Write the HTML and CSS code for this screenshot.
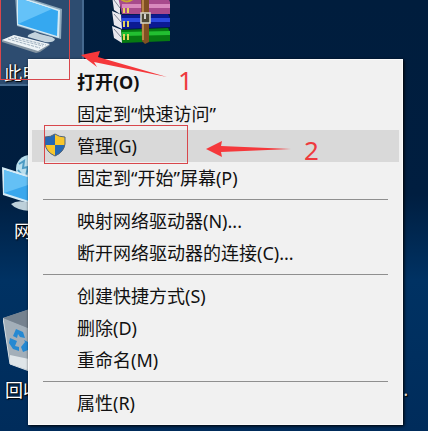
FILE: index.html
```html
<!DOCTYPE html>
<html lang="zh-CN">

<head>
	<title>桌面</title>
	<meta charset="UTF-8">
	<meta name="viewport" content="width=device-width, initial-scale=1.0">
	<link rel="stylesheet" href="styles.css">
</head>

<body>
	<div class="desktop">

		<!-- desktop icons -->
		<div class="shortcut computer selected">
			<svg class="icon" width="64" height="56" viewBox="0 0 64 56">
				<path d="M15 -6L62 9L61 39L57 38L17 26Z" fill="#8fa9bb"/>
				<path d="M17 -4L60 10L59 38L17 25Z" fill="#d4eaf5"/>
				<path d="M18 -2L58 11L57 36L18 24Z" fill="#35a8f0"/>
				<path d="M18 -2L52 9L18 24Z" fill="#64c2f8"/>
				<path d="M35 32L40 34L52 37L55 39Q54 43 45 42L28 37Q26 35 35 32Z" fill="#c3d3dd"/>
				<path d="M2 40L14 35L50 45L40 52L36 53L2 42Z" fill="#8495a3"/>
				<path d="M2 40L14 35L50 44L38 51Z" fill="#eef4f7"/>
				<path d="M8 39L40 48M11 38L43 46M14 37L46 45" stroke="#a0b1bf" stroke-dasharray="3 1" fill="none"/>
			</svg>
			<span class="name">此电脑</span>
		</div>

		<div class="shortcut archive">
			<svg class="icon" width="64" height="46" viewBox="0 0 64 46">
				<path d="M2 -4L10 -2V14L4 10ZM2 11L12 15V29L4 25ZM2 26L12 30V43L4 38Z" fill="#e9e8ef"/>
				<path d="M4 0L10 8M4 14L11 22M4 29L11 37" stroke="#7d8292"/>
				<path d="M8 -3H58L60 2V14H12Z" fill="#a84a8c"/>
				<path d="M12 4H60V8H12Z" fill="#d989bd"/>
				<path d="M11 15L58 14L60 18V27L12 29Z" fill="#0b1a93"/>
				<path d="M12 18H60V22H12Z" fill="#2b49e0"/>
				<path d="M11 30L58 28L60 32V41L12 43Z" fill="#077a12"/>
				<path d="M12 32L60 31V35L12 36Z" fill="#22bf31"/>
				<path d="M14 8V13M18 8V13M14 21V27M18 21V27M14 34V40M18 34V40" stroke="#e6d35d" stroke-width="2"/>
				<path d="M31 -2H39V42L35 44L32 41Z" fill="#805022"/>
				<path d="M33 0V40" stroke="#b98447" stroke-width="2"/>
				<path d="M10 -2Q16 5 24 -2" stroke="#c7a62f" stroke-width="2" fill="none"/>
				<rect x="31" y="13" width="9" height="10" fill="#4d4836" stroke="#d9d8c8" stroke-width="1.5"/>
				<path d="M35 14V19" stroke="#fff" stroke-width="1.5"/>
			</svg>
		</div>

		<div class="shortcut network">
			<svg class="icon" width="60" height="64" viewBox="0 0 60 64">
				<circle cx="28" cy="19" r="14" fill="#b9deed"/>
				<path d="M17 14L22 11L21 18L26 17L24 26M16 20L20 25" stroke="#4c9bc4" stroke-width="2" fill="none"/>
				<path d="M0 17L54 34V62L1 45Z" fill="#d4eaf5"/>
				<path d="M2 20L52 36V59L2 43Z" fill="#39a7ed"/>
				<path d="M2 20L38 31L2 43Z" fill="#64c0f5"/>
				<path d="M9 54Q16 49 28 53V61Q14 60 9 54Z" fill="#bdd0da"/>
			</svg>
			<span class="name">网络</span>
		</div>

		<div class="shortcut recycle">
			<svg class="icon" width="56" height="64" viewBox="0 0 56 64">
				<path d="M0 9L27 0L54 8L46 61L24 61L7 55Z" fill="#8795a3"/>
				<path d="M0 9L25 19L29 63L7 55Z" fill="#a3afb9"/>
				<path d="M0 9L27 0L54 8L25 19Z" fill="#75828f"/>
				<path d="M7 46L26 50L28 62L7 55Z" fill="#dfe5e8"/>
				<path d="M0 9L7 55L29 63" stroke="#d6dee3" fill="none"/>
				<path d="M10 27L13 20L20 23L22 29L17 28L15 25L14 29ZM7 29L14 32L12 37L16 38V42L10 40L6 34ZM18 38L22 33L21 31L27 34L25 41L20 43Z" fill="#2589d2"/>
			</svg>
			<span class="name">回收站</span>
		</div>

		<span class="name more">.</span>

		<!-- context menu -->
		<div class="menu">
			<button type="button" class="item default">打开(O)</button>
			<button type="button" class="item">固定到“快速访问”</button>
			<button type="button" class="item active">
				<svg class="shield" width="22" height="24" viewBox="0 0 22 24">
					<path d="M11 1Q15 4 21 4V11Q20 19 11 23Q2 19 1 11V4Q7 4 11 1Z" fill="#f8c62c"/>
					<path d="M11 1V12H1V4Q7 4 11 1ZM11 12H21Q19 20 11 23Z" fill="#2468b6"/>
					<path d="M11 1Q15 4 21 4V11Q20 19 11 23Q2 19 1 11V4Q7 4 11 1Z" fill="none" stroke="#536478"/>
				</svg>
				管理(G)
			</button>
			<button type="button" class="item">固定到“开始”屏幕(P)</button>
			<hr>
			<button type="button" class="item">映射网络驱动器(N)...</button>
			<button type="button" class="item">断开网络驱动器的连接(C)...</button>
			<hr>
			<button type="button" class="item">创建快捷方式(S)</button>
			<button type="button" class="item">删除(D)</button>
			<button type="button" class="item">重命名(M)</button>
			<hr>
			<button type="button" class="item">属性(R)</button>
		</div>

		<!-- step marks -->
		<svg class="arrows" width="300" height="170" viewBox="0 0 300 170">
			<path d="M81 55L100 51L98 57L167 77L94 62L97 67Z" fill="#f5383b"/>
			<path d="M206 149L222 141L221 146L291 149L221 152L222 157Z" fill="#f5383b"/>
		</svg>
		<div class="frame frame-one"></div>
		<div class="frame frame-two"></div>
		<span class="step step-one">1</span>
		<span class="step step-two">2</span>
	</div>
</body>

</html>
```
FILE: styles.css
```css
* {
	box-sizing: border-box;
}

body {
	margin: 0;
	font-family: "Noto Sans", "Noto Sans CJK SC", sans-serif;
	font-size: 18px;
	line-height: 24px;
}

.desktop {
	position: relative;
	display: flow-root;
	min-height: 100vh;
	overflow: hidden;
	background: linear-gradient(to bottom, #001d3d, #001e40 45%, #003263 65%, #002c5b);
}

/* Desktop icons */
.shortcut {
	position: absolute;
	width: 84px;
}

.icon {
	display: block;
}

.name {
	color: #fff;
	text-shadow: 1px 1px 1px #000, 0 0 2px #000;
}

.shortcut .name {
	display: block;
	padding: 5px 0 0 4px;
}

.computer {
	top: 0;
	left: 0;
	height: 86px;
}

.selected {
	background: #2d4c70;
	border-right: 2px solid #45698f;
	border-bottom: 2px solid #45698f;
}

.archive {
	top: 0;
	left: 110px;
}

.network {
	top: 150px;
	left: 2px;
}

.network .name {
	padding-left: 12px;
}

.recycle {
	top: 309px;
	left: 3px;
}

.recycle .name {
	padding-left: 2px;
}

.more {
	position: absolute;
	top: 377px;
	right: 20px;
}

/* Context menu */
.menu {
	position: relative;
	margin: 59px 25px 6px 28px;
	padding: 6px 3px 5px;
	background: #f1f1f1;
	border: 1px solid #fafafa;
	box-shadow: 1px 1px 3px #000;
}

.item {
	position: relative;
	display: block;
	width: 100%;
	height: 32px;
	padding: 0 0 0 45px;
	border: none;
	background: none;
	color: #111;
	font: inherit;
	text-align: left;
	white-space: nowrap;
}

.item:hover,
.active {
	background: #d9d9d9;
}

.default {
	font-weight: bold;
}

.shield {
	position: absolute;
	top: 3px;
	left: 12px;
}

.menu hr {
	height: 1px;
	margin: 5px 11px;
	border: none;
	background: #8f8f8f;
}

/* Step marks */
.arrows {
	position: absolute;
	top: 0;
	left: 0;
	pointer-events: none;
}

.frame {
	position: absolute;
	border: 1px solid #d8474c;
	pointer-events: none;
}

.frame-one {
	top: -2px;
	left: 0;
	width: 70px;
	height: 82px;
}

.frame-two {
	top: 125px;
	left: 44px;
	width: 144px;
	height: 39px;
}

.step {
	position: absolute;
	color: #ee3a3e;
	font-size: 26px;
}

.step-one {
	top: 68px;
	left: 178px;
}

.step-two {
	top: 138px;
	left: 304px;
}
```
